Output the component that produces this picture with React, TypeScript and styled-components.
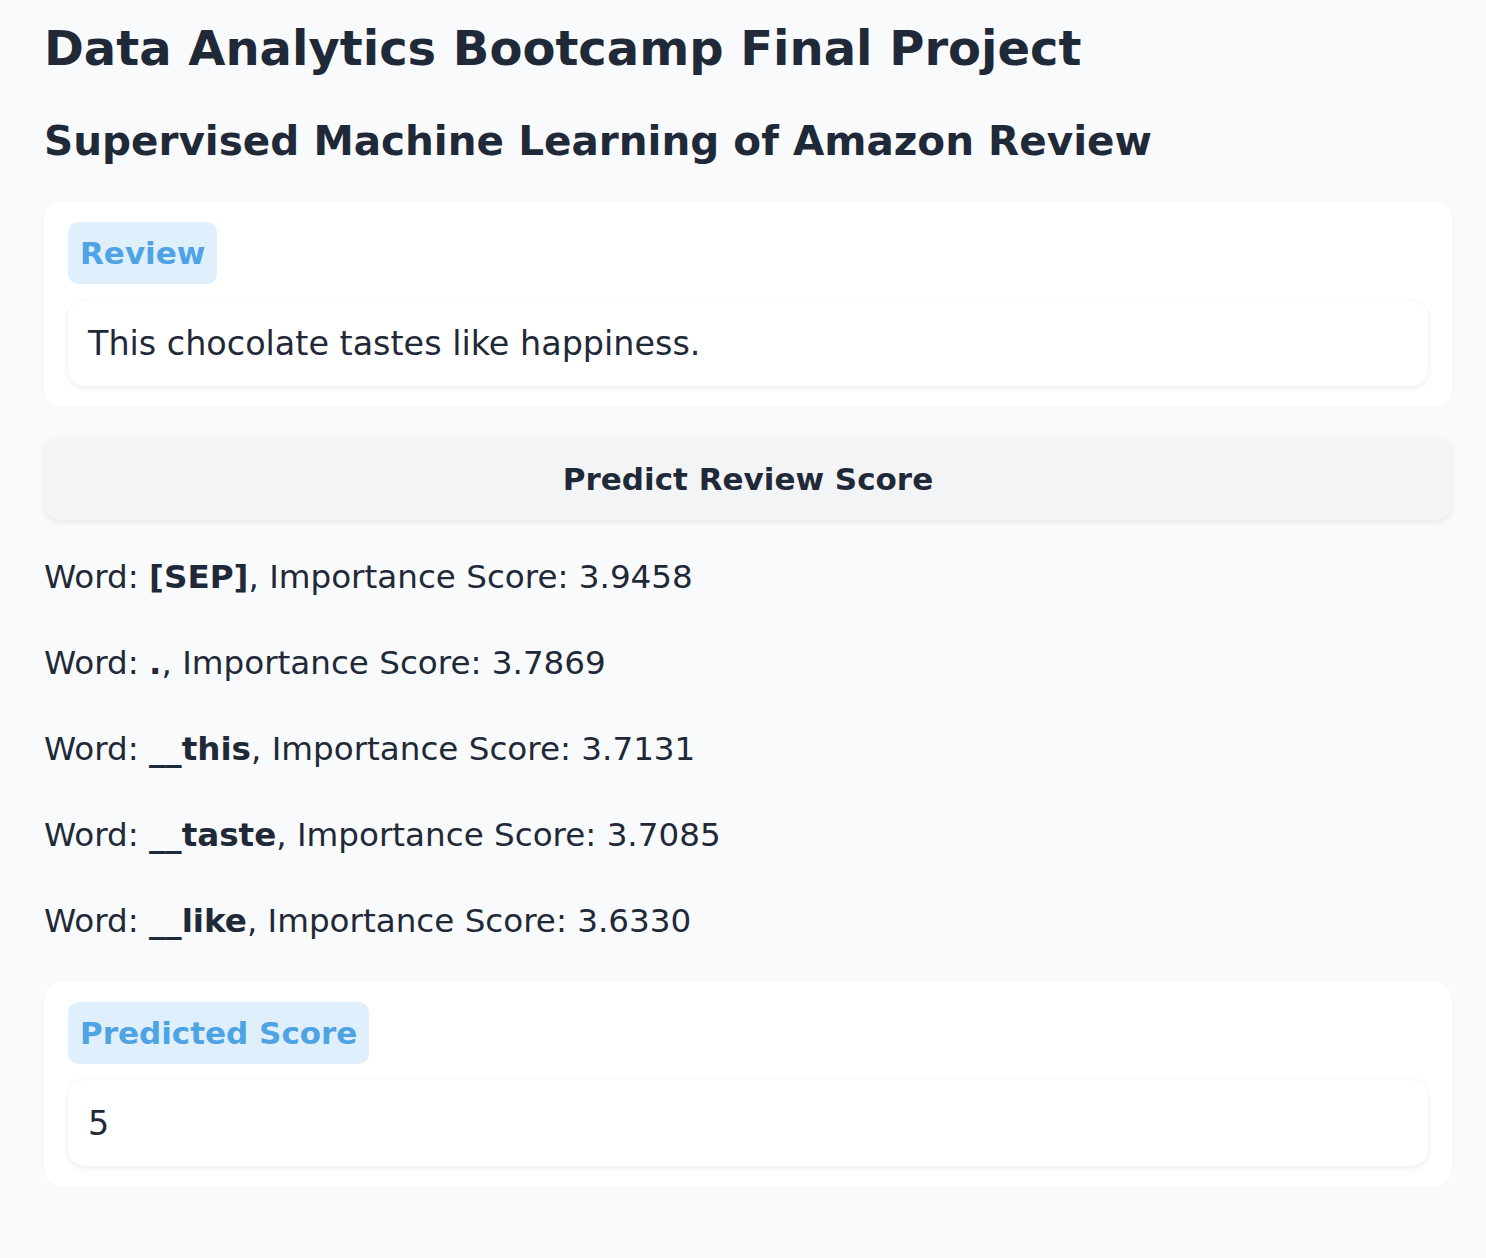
import styled, { createGlobalStyle } from "styled-components";

const GlobalStyle = createGlobalStyle`
  html, body {
    margin: 0;
    padding: 0;
    background: #f9fafb;
  }
  body {
    font-family: "DejaVu Sans", "Open Sans", sans-serif;
    color: #1f2937;
  }
`;

const words = [
  { word: "[SEP]", score: "3.9458" },
  { word: ".", score: "3.7869" },
  { word: "__this", score: "3.7131" },
  { word: "__taste", score: "3.7085" },
  { word: "__like", score: "3.6330" },
];

const App = () => {
  return (
    <Page>
      <GlobalStyle />
      <Title>Data Analytics Bootcamp Final Project</Title>
      <Subtitle>Supervised Machine Learning of Amazon Review</Subtitle>
      <Block $top={34}>
        <Label>Review</Label>
        <Field>This chocolate tastes like happiness.</Field>
      </Block>
      <PredictButton>Predict Review Score</PredictButton>
      <WordList>
        {words.map((w) => (
          <WordLine key={w.word}>
            Word: <strong>{w.word}</strong>, Importance Score: {w.score}
          </WordLine>
        ))}
      </WordList>
      <Block $top={18}>
        <Label>Predicted Score</Label>
        <Field>5</Field>
      </Block>
    </Page>
  );
};

export default App;

const Page = styled.div`
  display: flex;
  flex-direction: column;
  padding: 14px 34px 40px 44px;
  min-height: 1258px;
  box-sizing: border-box;
`;

const Title = styled.h1`
  margin: 0;
  font-size: 48px;
  font-weight: 700;
  line-height: 68px;
`;

const Subtitle = styled.h2`
  margin: 32px 0 0;
  font-size: 40.5px;
  font-weight: 700;
  line-height: 54px;
`;

const Block = styled.div<{ $top: number }>`
  margin-top: ${(p) => p.$top}px;
  background: #ffffff;
  border-radius: 16px;
  padding: 20px 24px;
  display: flex;
  flex-direction: column;
  align-items: flex-start;
  gap: 16px;
  box-shadow: 0 0 2px rgba(0, 0, 0, 0.03);
`;

const Label = styled.span`
  background: #e0effc;
  color: #4da3e4;
  font-weight: 700;
  font-size: 31px;
  line-height: 62px;
  padding: 0 12px;
  border-radius: 10px;
`;

const Field = styled.div`
  align-self: stretch;
  box-sizing: border-box;
  height: 86px;
  display: flex;
  align-items: center;
  padding: 0 20px;
  background: #ffffff;
  border-radius: 16px;
  box-shadow: 0 2px 6px rgba(0, 0, 0, 0.08), 0 0 1px rgba(0, 0, 0, 0.06);
  font-size: 33.4px;
`;

const PredictButton = styled.button`
  margin-top: 32px;
  height: 82px;
  border: none;
  border-radius: 16px;
  background: #f3f4f6;
  box-shadow: 0 2px 6px rgba(0, 0, 0, 0.08);
  font-family: inherit;
  color: #1f2937;
  font-weight: 700;
  font-size: 31px;
  cursor: pointer;
`;

const WordList = styled.div`
  display: flex;
  flex-direction: column;
  padding-top: 14px;
`;

const WordLine = styled.p`
  margin: 0;
  height: 86px;
  display: flex;
  align-items: center;
  white-space: pre;
  font-size: 32.6px;

  strong {
    font-weight: 700;
  }
`;
